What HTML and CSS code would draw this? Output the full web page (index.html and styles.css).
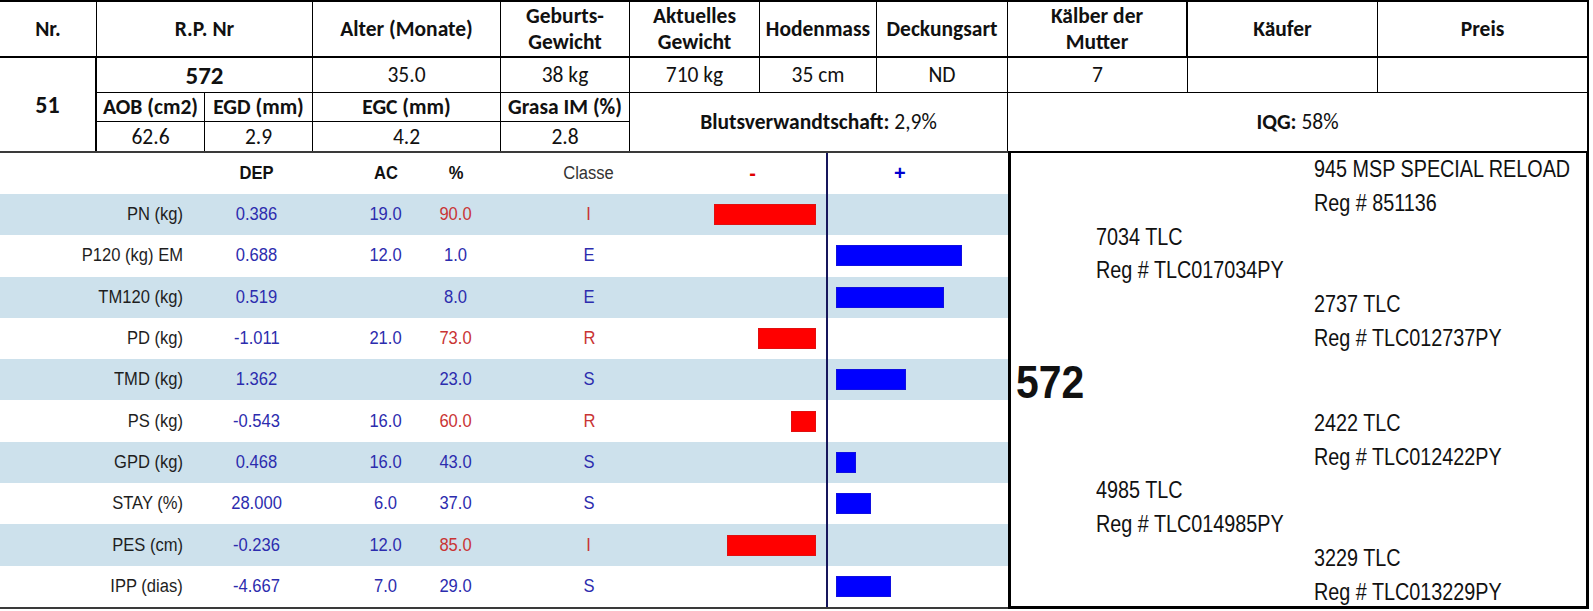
FILE: index.html
```html
<!DOCTYPE html>
<html lang="de">
<head>
<meta charset="utf-8">
<title>Stier 572</title>
<link rel="stylesheet" href="styles.css">
</head>
<body>
<div class="sheet">
  <div class="top">
    <div class="c h">Nr.</div>
    <div class="c h span2">R.P. Nr</div>
    <div class="c h">Alter (Monate)</div>
    <div class="c h">Geburts-<br>Gewicht</div>
    <div class="c h">Aktuelles<br>Gewicht</div>
    <div class="c h">Hodenmass</div>
    <div class="c h">Deckungsart</div>
    <div class="c h thick-r">Kälber der<br>Mutter</div>
    <div class="c h">Käufer</div>
    <div class="c h last">Preis</div>

    <div class="c nr">51</div>
    <div class="c span2 rp">572</div>
    <div class="c">35.0</div>
    <div class="c">38 kg</div>
    <div class="c">710 kg</div>
    <div class="c">35 cm</div>
    <div class="c">ND</div>
    <div class="c">7</div>
    <div class="c"></div>
    <div class="c last"></div>

    <div class="c sh">AOB (cm2)</div>
    <div class="c sh">EGD (mm)</div>
    <div class="c sh">EGC (mm)</div>
    <div class="c sh">Grasa IM (%)</div>
    <div class="c wide"><span><b>Blutsverwandtschaft:</b> 2,9%</span></div>
    <div class="c wide last"><span><b>IQG:</b> 58%</span></div>

    <div class="c end">62.6</div>
    <div class="c end">2.9</div>
    <div class="c end">4.2</div>
    <div class="c end">2.8</div>
  </div>

  <div class="lower">
    <div class="chart">
      <div class="row hrow">
        <div class="cell lbl"></div>
        <div class="cell ctr b"><span class="t">DEP</span></div>
        <div class="cell ctr b"><span class="t">AC</span></div>
        <div class="cell ctr b"><span class="t">%</span></div>
        <div class="cell ctr classe"><span class="t">Classe</span></div>
        <div class="neg"><span class="minus">-</span></div>
        <div class="pos"><span class="plus">+</span></div>
      </div>

      <div class="row alt">
        <div class="cell lbl"><span class="t">PN (kg)</span></div>
        <div class="cell ctr blue"><span class="t">0.386</span></div>
        <div class="cell ctr blue"><span class="t">19.0</span></div>
        <div class="cell ctr red"><span class="t">90.0</span></div>
        <div class="cell ctr red"><span class="t">I</span></div>
        <div class="neg"><div class="bar r" style="width:102px"></div></div>
        <div class="pos"></div>
      </div>

      <div class="row">
        <div class="cell lbl"><span class="t">P120 (kg) EM</span></div>
        <div class="cell ctr blue"><span class="t">0.688</span></div>
        <div class="cell ctr blue"><span class="t">12.0</span></div>
        <div class="cell ctr blue"><span class="t">1.0</span></div>
        <div class="cell ctr blue"><span class="t">E</span></div>
        <div class="neg"></div>
        <div class="pos"><div class="bar bl" style="width:126px"></div></div>
      </div>

      <div class="row alt">
        <div class="cell lbl"><span class="t">TM120 (kg)</span></div>
        <div class="cell ctr blue"><span class="t">0.519</span></div>
        <div class="cell ctr blue"></div>
        <div class="cell ctr blue"><span class="t">8.0</span></div>
        <div class="cell ctr blue"><span class="t">E</span></div>
        <div class="neg"></div>
        <div class="pos"><div class="bar bl" style="width:108px"></div></div>
      </div>

      <div class="row">
        <div class="cell lbl"><span class="t">PD (kg)</span></div>
        <div class="cell ctr blue"><span class="t">-1.011</span></div>
        <div class="cell ctr blue"><span class="t">21.0</span></div>
        <div class="cell ctr red"><span class="t">73.0</span></div>
        <div class="cell ctr red"><span class="t">R</span></div>
        <div class="neg"><div class="bar r" style="width:58px"></div></div>
        <div class="pos"></div>
      </div>

      <div class="row alt">
        <div class="cell lbl"><span class="t">TMD (kg)</span></div>
        <div class="cell ctr blue"><span class="t">1.362</span></div>
        <div class="cell ctr blue"></div>
        <div class="cell ctr blue"><span class="t">23.0</span></div>
        <div class="cell ctr blue"><span class="t">S</span></div>
        <div class="neg"></div>
        <div class="pos"><div class="bar bl" style="width:70px"></div></div>
      </div>

      <div class="row">
        <div class="cell lbl"><span class="t">PS (kg)</span></div>
        <div class="cell ctr blue"><span class="t">-0.543</span></div>
        <div class="cell ctr blue"><span class="t">16.0</span></div>
        <div class="cell ctr red"><span class="t">60.0</span></div>
        <div class="cell ctr red"><span class="t">R</span></div>
        <div class="neg"><div class="bar r" style="width:25px"></div></div>
        <div class="pos"></div>
      </div>

      <div class="row alt">
        <div class="cell lbl"><span class="t">GPD (kg)</span></div>
        <div class="cell ctr blue"><span class="t">0.468</span></div>
        <div class="cell ctr blue"><span class="t">16.0</span></div>
        <div class="cell ctr blue"><span class="t">43.0</span></div>
        <div class="cell ctr blue"><span class="t">S</span></div>
        <div class="neg"></div>
        <div class="pos"><div class="bar bl" style="width:20px"></div></div>
      </div>

      <div class="row">
        <div class="cell lbl"><span class="t">STAY (%)</span></div>
        <div class="cell ctr blue"><span class="t">28.000</span></div>
        <div class="cell ctr blue"><span class="t">6.0</span></div>
        <div class="cell ctr blue"><span class="t">37.0</span></div>
        <div class="cell ctr blue"><span class="t">S</span></div>
        <div class="neg"></div>
        <div class="pos"><div class="bar bl" style="width:35px"></div></div>
      </div>

      <div class="row alt">
        <div class="cell lbl"><span class="t">PES (cm)</span></div>
        <div class="cell ctr blue"><span class="t">-0.236</span></div>
        <div class="cell ctr blue"><span class="t">12.0</span></div>
        <div class="cell ctr red"><span class="t">85.0</span></div>
        <div class="cell ctr red"><span class="t">I</span></div>
        <div class="neg"><div class="bar r" style="width:89px"></div></div>
        <div class="pos"></div>
      </div>

      <div class="row">
        <div class="cell lbl"><span class="t">IPP (dias)</span></div>
        <div class="cell ctr blue"><span class="t">-4.667</span></div>
        <div class="cell ctr blue"><span class="t">7.0</span></div>
        <div class="cell ctr blue"><span class="t">29.0</span></div>
        <div class="cell ctr blue"><span class="t">S</span></div>
        <div class="neg"></div>
        <div class="pos"><div class="bar bl" style="width:55px"></div></div>
      </div>
    </div>

    <div class="ped">
      <div class="grp">
        <div class="ln gp"><span class="pt">945 MSP SPECIAL RELOAD</span></div>
        <div class="ln gp"><span class="pt">Reg # 851136</span></div>
        <div class="ln par"><span class="pt">7034 TLC</span></div>
        <div class="ln par"><span class="pt">Reg # TLC017034PY</span></div>
        <div class="ln gp"><span class="pt">2737 TLC</span></div>
        <div class="ln gp"><span class="pt">Reg # TLC012737PY</span></div>
      </div>
      <div class="self"><span class="pt">572</span></div>
      <div class="grp">
        <div class="ln gp"><span class="pt">2422 TLC</span></div>
        <div class="ln gp"><span class="pt">Reg # TLC012422PY</span></div>
        <div class="ln par"><span class="pt">4985 TLC</span></div>
        <div class="ln par"><span class="pt">Reg # TLC014985PY</span></div>
        <div class="ln gp"><span class="pt">3229 TLC</span></div>
        <div class="ln gp"><span class="pt">Reg # TLC013229PY</span></div>
      </div>
    </div>
  </div>
</div>
</body>
</html>
```

FILE: styles.css
```css
body {
  margin: 0;
  background: #ffffff;
}

.sheet {
  width: 1589px;
}

/* ---------- top info table ---------- */
.top {
  display: grid;
  grid-template-columns: 97px 108px 108px 188px 129px 130px 117px 131px 180px 190px 211px;
  grid-template-rows: 56px 35px 29px 29px;
  border-top: 2px solid #000;
  font-family: "Carlito", "Lato", "Liberation Sans", sans-serif;
  color: #111;
}

.c {
  box-sizing: border-box;
  border-right: 1px solid #000;
  border-bottom: 1px solid #000;
  display: flex;
  align-items: center;
  justify-content: center;
  text-align: center;
  font-size: 21.5px;
  white-space: nowrap;
}

.h {
  font-weight: 700;
  line-height: 26px;
  border-bottom: 2px solid #000;
}

.thick-r {
  border-right: 2px solid #000;
}

.last {
  border-right: 2px solid #000;
}

.span2 {
  grid-column: span 2;
}

.nr {
  grid-row: span 3;
  border-right: 2px solid #000;
  border-bottom: 0;
  font-size: 24px;
  font-weight: 700;
}

.rp {
  font-size: 25px;
  font-weight: 700;
}

.sh {
  font-weight: 700;
}

.wide {
  grid-column: span 3;
  grid-row: span 2;
  border-bottom: 0;
}

.end {
  border-bottom: 0;
}

/* ---------- lower part ---------- */
.lower {
  display: flex;
}

.chart {
  width: 1008px;
  box-sizing: border-box;
  border-top: 2px solid #3a3a3a;
  border-bottom: 2px solid #3a3a3a;
  font-family: "Liberation Sans", Arial, sans-serif;
  font-size: 18px;
  color: #1e1e1e;
}

.row {
  display: grid;
  grid-template-columns: 183px 148px 110px 30px 236px 119px 182px;
  height: 41.3px;
  align-items: center;
}

.hrow {
  height: 41px;
}

.alt {
  background: #cde1ec;
}

.cell {
  display: flex;
  align-items: center;
  white-space: nowrap;
}

.t {
  display: inline-block;
  transform: scaleX(0.92);
}

.lbl {
  justify-content: flex-end;
}

.lbl .t {
  transform-origin: right center;
}

.ctr {
  justify-content: center;
}

.ctr .t {
  transform-origin: center center;
}

.b {
  font-weight: 700;
  color: #111;
}

.classe {
  color: #333;
}

.blue {
  color: #2c2cae;
}

.red {
  color: #c93434;
}

.neg {
  align-self: stretch;
  display: flex;
  align-items: center;
  justify-content: flex-end;
  padding-right: 10px;
}

.pos {
  align-self: stretch;
  box-sizing: border-box;
  border-left: 2px solid #16165c;
  display: flex;
  align-items: center;
  padding-left: 8px;
}

.bar {
  height: 21px;
  box-sizing: border-box;
}

.bar.r {
  background: #ff0000;
  border: 1px solid #e01010;
}

.bar.bl {
  background: #0000ff;
  border: 1px solid #1010e0;
}

.minus {
  color: #e00000;
  font-weight: 700;
  font-size: 20px;
  padding-right: 60px;
}

.plus {
  color: #0000d0;
  font-weight: 700;
  font-size: 20px;
  padding-left: 58px;
}

/* ---------- pedigree ---------- */
.ped {
  width: 581px;
  height: 458px;
  box-sizing: border-box;
  border: 3px solid #000;
  border-top: 2px solid #000;
  font-family: "Liberation Sans", Arial, sans-serif;
  font-size: 23px;
  color: #111;
}

.pt {
  display: inline-block;
  transform: scaleX(0.86);
  transform-origin: left center;
}

.ln {
  height: 33.8px;
  line-height: 33.8px;
  white-space: nowrap;
}

.gp {
  padding-left: 303px;
}

.par {
  padding-left: 85px;
}

.self {
  height: 51px;
  line-height: 51px;
  font-size: 47px;
  font-weight: 700;
  padding-left: 5px;
}

.self .pt {
  transform: scaleX(0.87);
}
```
